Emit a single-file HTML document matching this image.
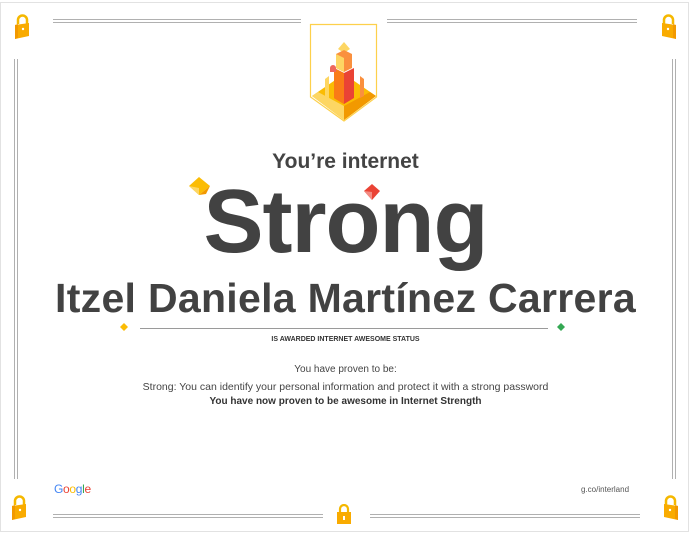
<!DOCTYPE html>
<html><head><meta charset="utf-8"><style>
body{margin:0;width:691px;height:535px;background:#fff;position:relative;overflow:hidden;font-family:"Liberation Sans",sans-serif;color:#3c3c3c}
.frame{position:absolute;left:0;top:2px;width:689px;height:530px;border:1px solid #e2e2e2;box-sizing:border-box}
.h{position:absolute;height:2px;border-top:1px solid #b0b0b0;border-bottom:1px solid #b0b0b0}
.v{position:absolute;width:2px;border-left:1px solid #b0b0b0;border-right:1px solid #b0b0b0}
.t{position:absolute;left:0;width:691px;text-align:center;white-space:nowrap}
.lock{position:absolute}
</style></head><body>
<div class="frame"></div>
<div class="h" style="left:53px;top:19px;width:248px"></div>
<div class="h" style="left:387px;top:19px;width:250px"></div>
<div class="h" style="left:53px;top:514px;width:270px"></div>
<div class="h" style="left:370px;top:514px;width:270px"></div>
<div class="v" style="left:14px;top:59px;height:420px"></div>
<div class="v" style="left:672px;top:59px;height:420px"></div>

<svg class="lock" style="left:14px;top:14px" width="17" height="26" viewBox="0 0 17 26"><path d="M4 10V6a4.5 4.5 0 0 1 9 0v4" fill="none" stroke="#f5b800" stroke-width="2.5"/><path d="M1 11l14-2v13L1 25z" fill="#f9ab00"/><path d="M1 11l3-1v14l-3 1z" fill="#f29900"/><circle cx="9" cy="15" r="1.2" fill="#fff"/></svg>
<svg class="lock" style="left:660px;top:14px" width="17" height="26" viewBox="0 0 17 26"><path d="M4 10V6a4.5 4.5 0 0 1 9 0v4" fill="none" stroke="#f5b800" stroke-width="2.5"/><path d="M2 9l14 2v14L2 22z" fill="#f9ab00"/><path d="M13 10l3 1v14l-3-1z" fill="#f29900"/><circle cx="8" cy="15" r="1.2" fill="#fff"/></svg>
<svg class="lock" style="left:11px;top:495px" width="17" height="26" viewBox="0 0 17 26"><path d="M4 10V6a4.5 4.5 0 0 1 9 0v4" fill="none" stroke="#f5b800" stroke-width="2.5"/><path d="M1 11l14-2v13L1 25z" fill="#f9ab00"/><path d="M1 11l3-1v14l-3 1z" fill="#f29900"/><circle cx="9" cy="15" r="1.2" fill="#fff"/></svg>
<svg class="lock" style="left:662px;top:495px" width="17" height="26" viewBox="0 0 17 26"><path d="M4 10V6a4.5 4.5 0 0 1 9 0v4" fill="none" stroke="#f5b800" stroke-width="2.5"/><path d="M2 9l14 2v14L2 22z" fill="#f9ab00"/><path d="M13 10l3 1v14l-3-1z" fill="#f29900"/><circle cx="8" cy="15" r="1.2" fill="#fff"/></svg>
<svg class="lock" style="left:336px;top:504px" width="16" height="20" viewBox="0 0 16 20"><path d="M4 8V5a4 4 0 0 1 8 0v3" fill="none" stroke="#f5b800" stroke-width="2.2"/><rect x="1" y="8" width="14" height="12" fill="#f9ab00"/><rect x="7" y="12" width="2" height="4" fill="#fff"/></svg>

<svg style="position:absolute;left:308px;top:22px" width="72" height="102" viewBox="0 0 72 102">
<path d="M2.5 2.5H68.5V75L36 99L2.5 75Z" fill="#fff" stroke="#fdd04b" stroke-width="1.2"/>
<path d="M4 74L36 52L68 74L36 98Z" fill="#fbbc04"/>
<path d="M4 74L36 98V84L10 70Z" fill="#fdd663"/>
<path d="M36 98L68 74L62 70L36 84Z" fill="#f29900"/>
<path d="M36 20l6 7-6 4-6-4z" fill="#fdd663"/>
<path d="M28 32l8-4 8 4v14l-8 4-8-4z" fill="#fa903e"/>
<path d="M28 32l8 4v14l-8-4z" fill="#fdd663"/>
<path d="M26 46l10 5 10-5v30l-10 6-10-6z" fill="#ea4335"/>
<path d="M26 46l10 5v31l-10-6z" fill="#fa7b17"/>
<path d="M17 57l4-3v22l-4-2z" fill="#fdd663"/>
<path d="M52 54l4 3v17l-4 2z" fill="#fa903e"/>
<path d="M22 46a3 3 0 0 1 6 0v4h-6z" fill="#ee675c"/>
</svg>

<div class="t" style="top:150px;font-size:21px;font-weight:bold;color:#444">You’re internet</div>
<div class="t" style="top:171px;font-size:90px;font-weight:bold;color:#424242;letter-spacing:-1px">Strong</div>
<svg style="position:absolute;left:188px;top:175px" width="30" height="30" viewBox="0 0 30 30"><path d="M1 11L11 2l11 9-11 9z" fill="#fbbc04"/><path d="M1 11l10 9V13z" fill="#fdd663"/><path d="M11 20l11-9-4 8z" fill="#f29900"/></svg>
<svg style="position:absolute;left:363px;top:183px" width="20" height="20" viewBox="0 0 20 20"><path d="M1 8L9 1l8 7-8 9z" fill="#ea4335"/><path d="M1 8l8 9V9z" fill="#f28b82"/></svg>
<div class="t" style="top:275px;font-size:41px;font-weight:bold;color:#424242;letter-spacing:0.3px">Itzel Daniela Martínez Carrera</div>
<div style="position:absolute;left:140px;top:328px;width:408px;height:1px;background:#9a9a9a"></div>
<svg style="position:absolute;left:120px;top:323px" width="8" height="8"><path d="M0 4L4 0l4 4-4 4z" fill="#fbbc04"/></svg>
<svg style="position:absolute;left:557px;top:323px" width="8" height="8"><path d="M0 4L4 0l4 4-4 4z" fill="#34a853"/></svg>
<div class="t" style="top:336px;font-size:7px;font-weight:bold;color:#333">IS AWARDED INTERNET AWESOME STATUS</div>
<div class="t" style="top:364px;font-size:10px;color:#444">You have proven to be:</div>
<div class="t" style="top:381px;font-size:10.5px;color:#444">Strong: You can identify your personal information and protect it with a strong password</div>
<div class="t" style="top:396px;font-size:10px;font-weight:bold;color:#333">You have now proven to be awesome in Internet Strength</div>
<div style="position:absolute;left:54px;top:482px;font-size:12px;letter-spacing:-0.3px"><span style="color:#4285f4">G</span><span style="color:#ea4335">o</span><span style="color:#fbbc04">o</span><span style="color:#4285f4">g</span><span style="color:#34a853">l</span><span style="color:#ea4335">e</span></div>
<div style="position:absolute;left:581px;top:485px;font-size:8px;color:#555">g.co/interland</div>
</body></html>
